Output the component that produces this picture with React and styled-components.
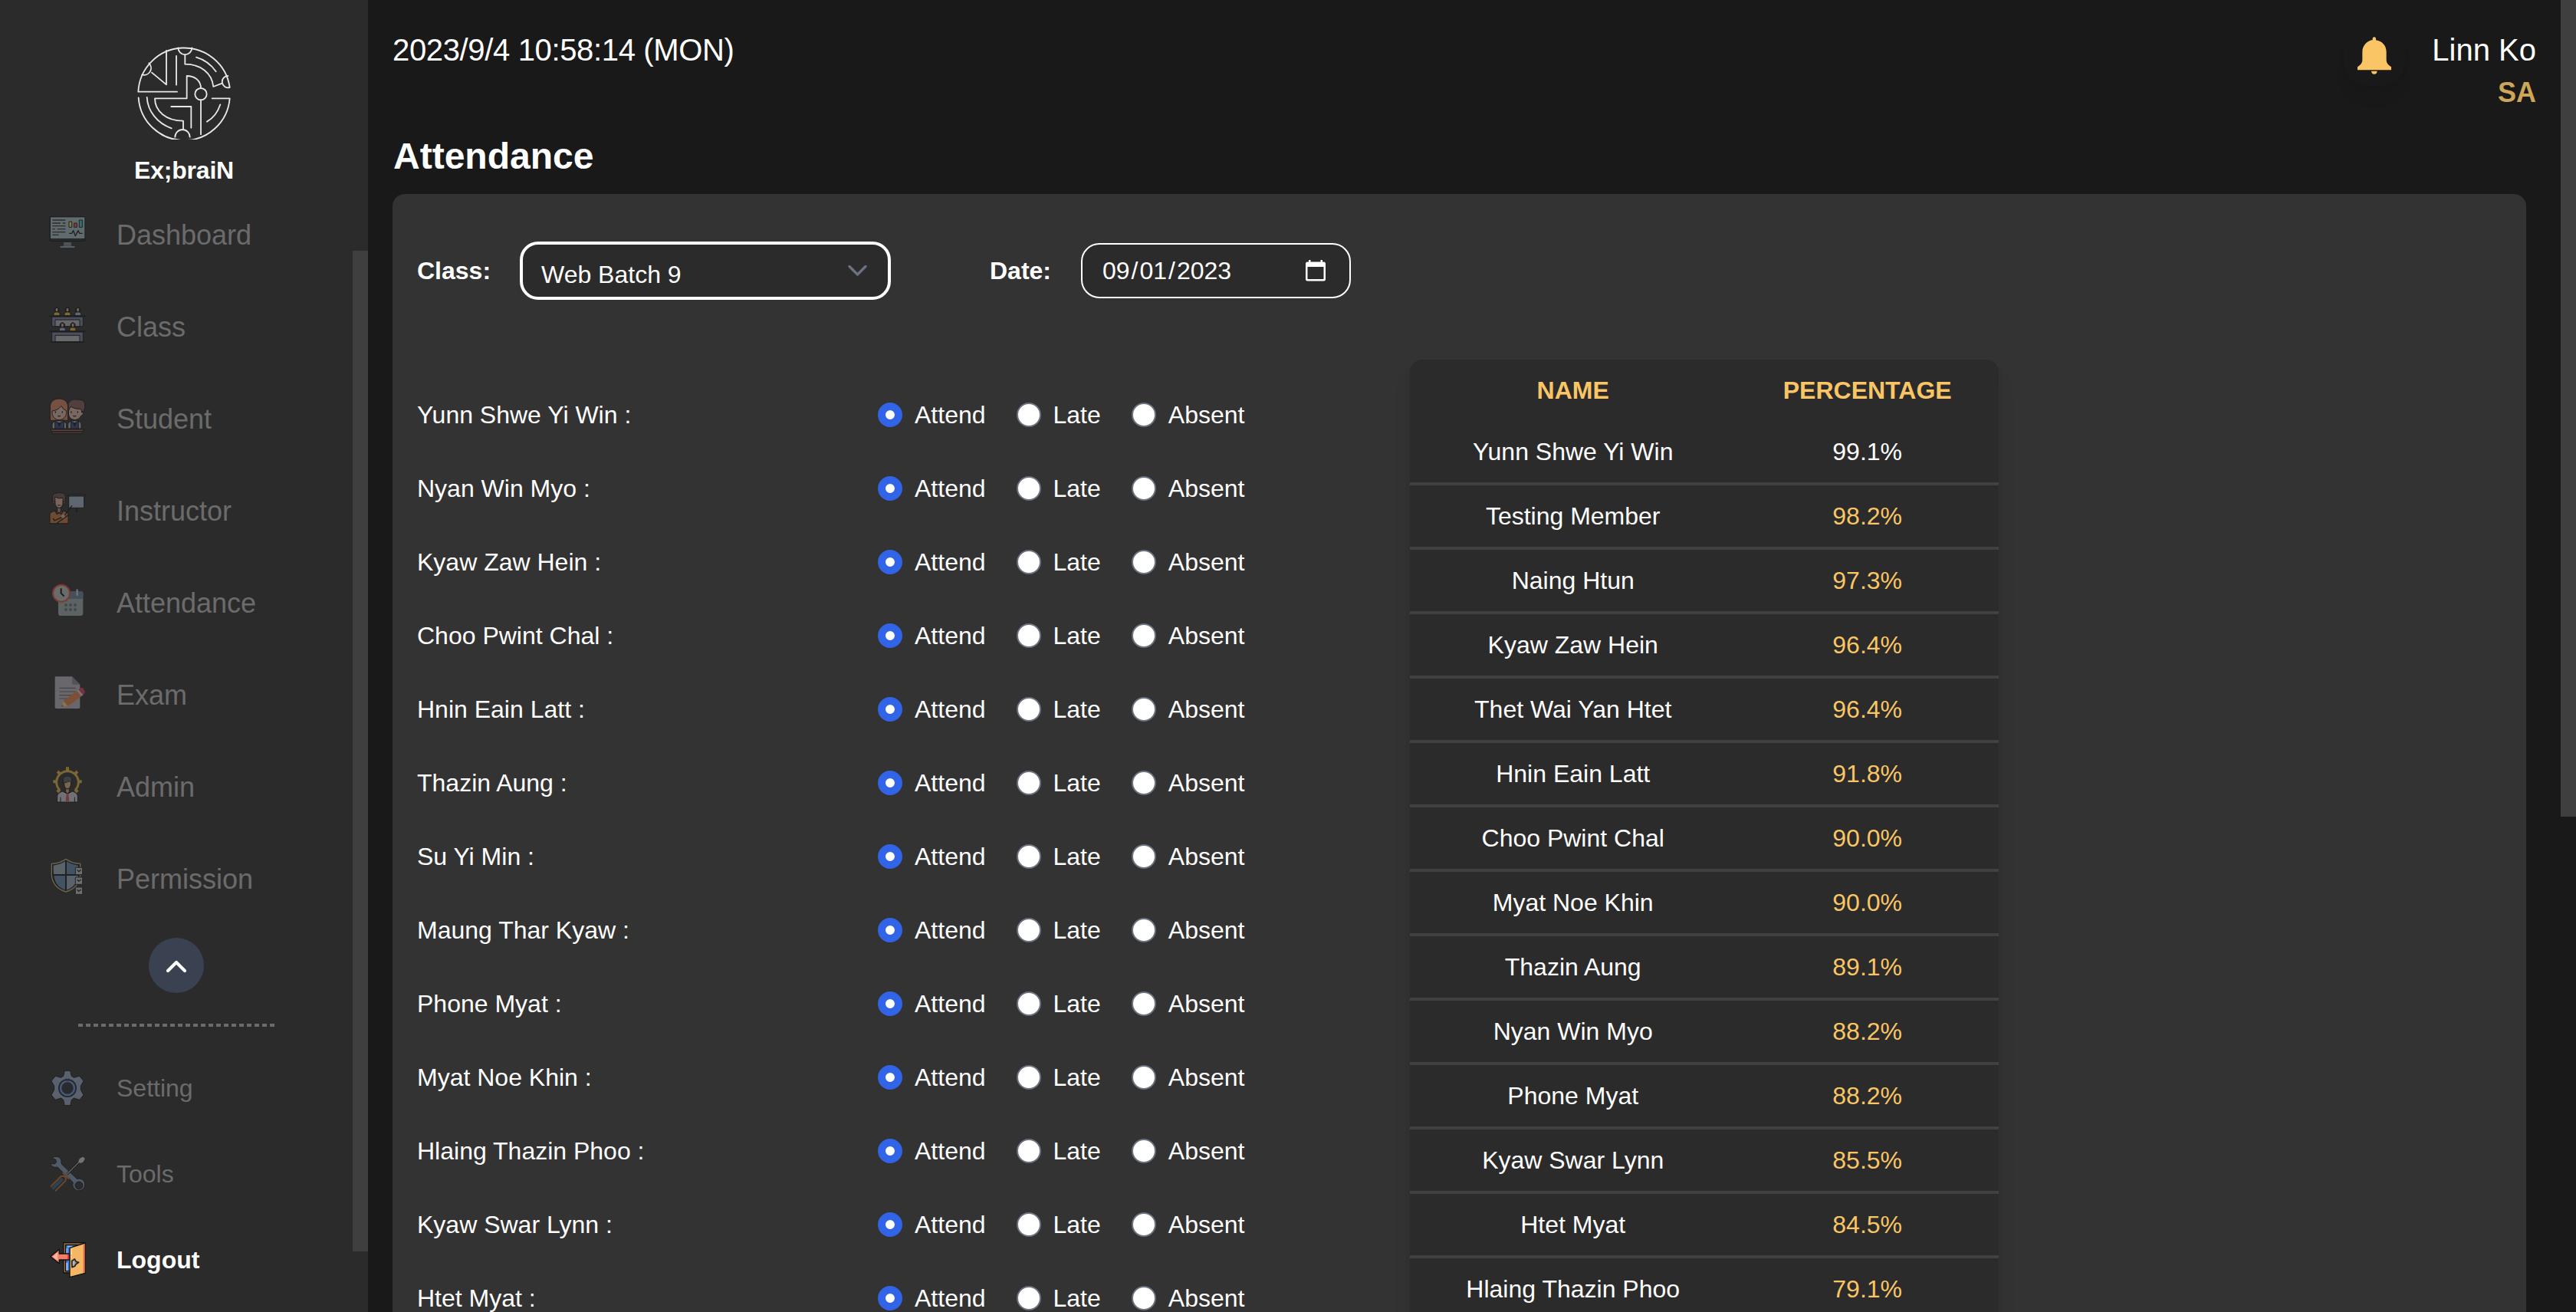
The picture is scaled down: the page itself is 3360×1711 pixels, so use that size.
import React from "react";
import styled, { createGlobalStyle } from "styled-components";

const GlobalStyle = createGlobalStyle`
  * { box-sizing: border-box; }
  body {
    margin: 0;
    background: #191919;
    color: #fff;
    font-family: "Liberation Sans", Arial, sans-serif;
    font-size: 32px;
    overflow: hidden;
  }
`;

const Page = styled.div`
  display: flex;
  width: 100%;
  height: 1711px;
  overflow: hidden;
`;

/* ---------- sidebar ---------- */

const Sidebar = styled.aside`
  display: flex;
  flex-direction: column;
  flex: none;
  width: 480px;
  background: #2b2b2b;
`;

const Brand = styled.div`
  display: flex;
  flex-direction: column;
  align-items: center;
  flex: none;
  height: 243px;
  padding-top: 60px;
  svg { display: block; }
`;

const BrandName = styled.div`
  margin-top: 20px;
  font-weight: 700;
  line-height: 40px;
  letter-spacing: -0.2px;
`;

const SideBody = styled.div`
  display: flex;
  flex: 1;
  min-height: 0;
`;

const SideContent = styled.div`
  display: flex;
  flex-direction: column;
  flex: 1;
`;

const Rail = styled.div`
  flex: none;
  width: 20px;
  padding-top: ${(p) => p.$offset}px;
`;

const Thumb = styled.div`
  height: ${(p) => p.$length}px;
  background: #3f3f3f;
`;

const NavItem = styled.a`
  display: flex;
  align-items: center;
  gap: 40px;
  flex: none;
  height: ${(p) => (p.$small ? 112 : 120)}px;
  padding-left: 64px;
  font-size: ${(p) => (p.$small ? 32 : 36)}px;
  font-weight: ${(p) => (p.$active ? 700 : 400)};
  color: ${(p) => (p.$active ? "#fff" : "#6b6b6b")};
  svg { display: block; flex: none; }
  span { padding-top: ${(p) => (p.$small ? 0 : 7)}px; }
`;

const Collapse = styled.button`
  display: flex;
  align-items: center;
  justify-content: center;
  align-self: center;
  flex: none;
  width: 72px;
  height: 72px;
  margin: 20px 0 40px;
  padding: 4px 0 0;
  border: 0;
  border-radius: 50%;
  background: #3a4150;
`;

const Divider = styled.div`
  align-self: center;
  flex: none;
  width: 256px;
  height: 4px;
  margin-bottom: 24px;
  background: repeating-linear-gradient(90deg, #6b6b6b 0 6px, transparent 6px 10px);
`;

/* ---------- main ---------- */

const Main = styled.main`
  display: flex;
  flex-direction: column;
  flex: 1;
  min-width: 0;
`;

const Header = styled.header`
  display: flex;
  justify-content: space-between;
  flex: none;
  height: 172px;
  padding: 35px 32px 0;
`;

const Clock = styled.div`
  font-size: 40px;
  line-height: 60px;
  letter-spacing: -0.35px;
`;

const Account = styled.div`
  display: flex;
`;

const BellButton = styled.button`
  display: flex;
  align-items: center;
  justify-content: center;
  width: 80px;
  height: 80px;
  margin: -3px 35px 0 0;
  padding: 0;
  border: 0;
  border-radius: 32px;
  background: transparent;
  box-shadow: 0 20px 24px -8px rgba(0, 0, 0, 0.06), 0 6px 10px -4px rgba(0, 0, 0, 0.06);
`;

const User = styled.div`
  padding-top: 2px;
  text-align: right;
  font-size: 40px;
  line-height: 56px;
`;

const Role = styled.div`
  font-size: 36px;
  font-weight: 700;
  color: #cfa557;
`;

const Title = styled.h1`
  flex: none;
  margin: 0 0 17px 33px;
  font-size: 48px;
  font-weight: 700;
  line-height: 64px;
`;

const Panel = styled.section`
  flex: 1;
  min-height: 0;
  margin: 0 45px 0 32px;
  padding: 62px 32px 0;
  border-radius: 16px 16px 0 0;
  background: #333;
  overflow: hidden;
`;

const Filters = styled.div`
  display: flex;
  align-items: center;
  height: 76px;
`;

const Label = styled.label`
  font-weight: 700;
  width: ${(p) => p.$width}px;
  margin-left: ${(p) => p.$gap || 0}px;
`;

const Select = styled.div`
  display: flex;
  align-items: center;
  justify-content: space-between;
  width: 484px;
  height: 76px;
  padding: 10px 27px 0 24px;
  border: 4px solid #fff;
  border-radius: 24px;
  background: #2b2b2b;
  svg { display: block; margin-top: -11px; }
`;

const DateField = styled.div`
  display: flex;
  align-items: center;
  width: 352px;
  height: 72px;
  padding: 0 28px 0 24px;
  border: 2px solid #fff;
  border-radius: 24px;
  background: #2b2b2b;
  svg { display: block; margin-left: auto; }
`;

const DatePart = styled.span`
  padding: 0 2px;
`;

const Body = styled.div`
  display: flex;
  align-items: flex-start;
  margin-top: 78px;
`;

const Roster = styled.div`
  flex: none;
  width: 1295px;
  padding-top: 24px;
`;

const RosterRow = styled.div`
  display: flex;
  align-items: center;
  height: 96px;
`;

const RosterName = styled.div`
  width: 601px;
`;

const Option = styled.label`
  display: flex;
  align-items: center;
  gap: 16px;
  margin-right: 40px;
`;

const Radio = styled.input`
  appearance: none;
  width: 32px;
  height: 32px;
  margin: 0;
  border: 2px solid #6b7280;
  border-radius: 50%;
  background: #fff;
  &:checked {
    border: 10px solid #3164e6;
  }
`;

const Table = styled.div`
  width: 768px;
  border-radius: 16px;
  background: #2b2b2b;
  box-shadow: 0 20px 30px -6px rgba(0, 0, 0, 0.1), 0 8px 12px -4px rgba(0, 0, 0, 0.1);
`;

const TableRow = styled.div`
  display: grid;
  grid-template-columns: 425.4px 342.6px;
  align-items: center;
  height: 84px;
  border-bottom: 4px solid #414141;
  text-align: center;
`;

const TableHead = styled(TableRow)`
  height: 80px;
  border-bottom: 0;
  font-weight: 700;
  color: #f9c565;
`;

const Percent = styled.div`
  color: ${(p) => (p.$top ? "#fff" : "#f9c565")};
`;

/* ---------- drawings ---------- */

const Logo = () => (
  <svg width="122" height="122" viewBox="117 90 366 366" fill="none" stroke="#e6e8e8" strokeWidth="5.5" strokeLinecap="round" strokeLinejoin="round">
    <path d="M273 269H121A180 180 0 0 1 479 252A23 23 0 1 1 472 207" />
    <path d="M449 236L415 249C409 196 366 161 304 161V124" />
    <path d="M277 97A27 27 0 0 0 331 97" />
    <path d="M348 134Q396 148 425 190" />
    <path d="M163 157A27 27 0 0 1 136 202M174 194L231 241V108M270 129V242" />
    <path d="M410 295H479A179 179 0 0 1 122 292" />
    <path d="M366 255C366 228 345 207 311 207V295H186C186 345 230 383 297 383V417" />
    <path d="M265 446A29 29 0 0 1 323 446M366 301V436" />
    <circle cx="366" cy="278" r="23" />
    <path d="M250 327H328V410M442 319Q427 365 390 386M155 291C158 345 195 392 251 412" />
  </svg>
);

const Icon = ({ y, children }) => (
  <svg width="48" height="48" viewBox={`72 ${y} 144 144`} fill="none" strokeLinejoin="round">
    {children}
  </svg>
);

const DashboardIcon = () => (
  <Icon y={57}>
    <rect x="74" y="67" width="140" height="98" rx="4" fill="#1c1e1f" />
    <rect x="78" y="70" width="133" height="83" fill="#616a6c" />
    <path d="M78 155H211V161H78Z" fill="#2a2d2e" />
    <path d="M130 168H158L160 182H128Z" fill="#4c5558" />
    <path d="M116 186H172" stroke="#566064" strokeWidth="6" />
    <path d="M85 81H136M85 93H117M125 93H136M85 104H136M85 116H96M104 116H136M85 128H136M85 139H110" stroke="#2a2e2f" strokeWidth="4" />
    <g stroke="#222" strokeWidth="3">
      <rect x="150" y="87" width="11" height="22" fill="#8a7840" />
      <rect x="170" y="93" width="11" height="16" fill="#87413f" />
      <rect x="190" y="81" width="12" height="28" fill="#2f7276" />
    </g>
    <path d="M150 133H161L167 122L175 143L186 122L191 133H203" stroke="#222" strokeWidth="4" />
  </Icon>
);

const Bust = ({ x, y, fill }) => (
  <g stroke="#1f1f20" strokeWidth="3">
    <path d={`M${x - 12} ${y + 34}V${y + 26}Q${x - 12} ${y + 19} ${x} ${y + 19}T${x + 12} ${y + 26}V${y + 34}Z`} fill={fill} />
    <path d={`M${x - 9} ${y + 19}V${y + 7}Q${x} ${y - 5} ${x + 9} ${y + 7}V${y + 19}Z`} fill="#272626" />
    <ellipse cx={x} cy={y + 11} rx="6" ry="8" fill="#766763" />
  </g>
);

const ClassIcon = () => (
  <Icon y={417}>
    <Bust x={102} y={421} fill="#7d682e" />
    <Bust x={144} y={421} fill="#7d682e" />
    <Bust x={185} y={421} fill="#5c6675" />
    <path d="M83 459H205V497H83Z" fill="#4b4f5d" stroke="#1f1f20" strokeWidth="3" />
    <path d="M96 471H192V497H96Z" fill="#656668" stroke="#1f1f20" strokeWidth="3" />
    <path d="M73 457H215M73 516H215" stroke="#1f1f20" strokeWidth="5" />
    <Bust x={124} y={481} fill="#5c6675" />
    <Bust x={165} y={481} fill="#7d682e" />
    <path d="M83 519H205V557H83Z" fill="#4b4f5d" stroke="#1f1f20" strokeWidth="3" />
    <path d="M96 532H192V557H96Z" fill="#68696a" stroke="#1f1f20" strokeWidth="3" />
    <path d="M78 558H210" stroke="#1f1f20" strokeWidth="4" />
  </Icon>
);

const StudentIcon = () => (
  <Icon y={777}>
    <g stroke="#211f1f" strokeWidth="3">
      <path d="M84 897V880Q86 866 112 866T140 880V897Z" fill="#656468" />
      <path d="M146 897V880Q148 866 172 866T198 880V897Z" fill="#656468" />
      <path d="M95 897V868L112 876L130 868V897ZM157 897V868L172 876L187 868V897Z" fill="#30344f" />
      <path d="M76 862V812C76 791 91 780 111 780S146 791 146 812V862Q142 868 132 864L90 865Q80 868 76 862Z" fill="#765040" />
      <path d="M84 828Q107 825 120 808Q126 822 140 827C142 850 127 863 111 863S82 848 84 828Z" fill="#7a6761" />
      <path d="M147 800Q155 779 181 783Q211 782 212 802V812Q212 825 205 830L147 828Z" fill="#513f3d" />
      <path d="M148 828Q153 811 158 812Q178 822 196 820Q200 826 200 834Q209 832 204 842L198 846Q190 862 172 863Q150 860 148 840Z" fill="#7a6761" />
      <path d="M80 900H206V908H80Z" fill="#5b4140" />
      <path d="M84 909H202V917H84Z" fill="#4c393a" />
    </g>
    <path d="M97 829V836M124 829V836M159 829V836M184 829V836M106 846Q111 851 117 846M166 846Q172 851 178 846" stroke="#282424" strokeWidth="4" />
    <path d="M104 874L112 890L120 874ZM165 874L172 890L179 874Z" fill="#1f1f24" />
  </Icon>
);

const InstructorIcon = () => (
  <Icon y={57}>
    <g stroke="#1f1e1e" strokeWidth="3">
      <path d="M146 74H215V80H146Z" fill="#32393f" />
      <path d="M149 81H209V127H149Z" fill="#5e6670" />
      <path d="M75 188V152Q77 142 97 139L111 146L125 139Q146 142 147 153V188Z" fill="#6e4a31" />
      <path d="M104 126H118V142L111 147L104 142Z" fill="#65534b" />
      <path d="M85 103V86Q86 70 100 70Q111 64 124 69Q136 71 136 86V103Z" fill="#483a38" />
      <path d="M95 84Q109 93 126 88V112Q124 126 111 128Q98 126 96 112Z" fill="#7a655c" />
      <path d="M86 100Q91 99 95 110Q86 112 86 100ZM136 100Q131 99 127 110Q136 112 136 100Z" fill="#7a655c" />
    </g>
    <path d="M103 115H119Q111 124 103 115Z" fill="#3a302e" />
    <path d="M162 118L130 160M88 168L93 177L122 164M147 155L103 187M179 129V141" stroke="#1d1c1c" strokeWidth="4" />
    <circle cx="127" cy="160" r="7" fill="#7a655c" />
    <path d="M173 136H186L179 146Z" fill="#1f2021" />
    <path d="M95 139L103 151L111 146L120 151L127 139" stroke="#22262b" strokeWidth="5" />
  </Icon>
);

const AttendanceIcon = () => (
  <Icon y={417}>
    <rect x="108" y="453" width="97" height="96" rx="10" fill="#5d6364" />
    <path d="M108 483V463Q108 453 118 453H195Q205 453 205 463V483Z" fill="#455058" />
    <path d="M182 448V468" stroke="#6e7374" strokeWidth="7" strokeLinecap="round" />
    <g fill="#414b4c">
      {[138, 156, 174].map((x) =>
        [507, 525].map((y) => <rect key={`${x}-${y}`} x={x - 6} y={y - 6} width="12" height="12" rx="5" />)
      )}
    </g>
    <circle cx="120" cy="461" r="33" fill="#6a6c6c" stroke="#7d3b34" strokeWidth="6" />
    <path d="M119 442V461L131 473" stroke="#1c1c1c" strokeWidth="6" />
  </Icon>
);

const ExamIcon = () => (
  <Icon y={777}>
    <path d="M95 791Q95 787 99 787H162L193 818V907Q193 912 188 912H100Q95 912 95 907Z" fill="#69676b" />
    <path d="M162 787L193 818H167Q162 818 162 812Z" fill="#555159" />
    <path d="M112 832H176M112 846H176M112 860H165M112 873H145" stroke="#454347" strokeWidth="3.5" />
    <path d="M121 905L128 881L182 842L200 863L145 903Z" fill="#7c5036" />
    <path d="M121 905L128 881L145 903Z" fill="#877253" />
    <path d="M121 905L123 897L129 903Z" fill="#444" />
    <path d="M181 842L189 836L207 857L198 864Z" fill="#777379" />
    <path d="M187 838L194 832Q200 828 206 834L211 842Q215 849 209 855L205 859Z" fill="#76323f" />
  </Icon>
);

const AdminIcon = () => (
  <Icon y={57}>
    <g stroke="#7b6635" strokeWidth="12">
      <path d="M144 61V78M88 118H103M185 118H200M105 78L115 88M183 78L173 88M104 158L114 149M184 158L174 149" />
      <path d="M114 151A43 43 0 1 1 174 151" strokeWidth="9" />
    </g>
    <g stroke="#202021" strokeWidth="3">
      <path d="M104 198V174Q106 161 125 156L144 166L163 156Q182 161 184 174V198Z" fill="#707176" />
      <path d="M137 143H151V158L144 166L137 158Z" fill="#6d604e" />
      <path d="M127 124V108Q129 96 144 96T161 108V124Z" fill="#3d4045" />
      <path d="M131 122Q145 121 152 115Q154 121 158 123Q157 145 144 146T131 122Z" fill="#77674f" />
      <path d="M117 198V179M172 198V179" />
    </g>
    <path d="M140 165H148L151 198H137Z" fill="#743b3a" />
  </Icon>
);

const PermissionIcon = () => (
  <Icon y={417}>
    <path d="M138 421Q164 439 194 439V484Q190 532 138 549Q86 532 82 484V439Q112 439 138 421Z" fill="#1e2225" stroke="#6e654b" strokeWidth="4" />
    <path d="M135 430V480H90Q88 463 89 446Q115 443 135 430Z" fill="#596369" />
    <path d="M141 430V480H186V446Q161 443 141 430Z" fill="#435363" />
    <path d="M135 486V542Q95 527 91 486Z" fill="#435363" />
    <path d="M141 486V542Q181 527 186 486Z" fill="#596369" />
    {[468, 506, 545].map((y) => (
      <g key={y}>
        <rect x="175" y={y - 14} width="28" height="28" rx="2" fill="#6b6d6e" stroke="#232425" strokeWidth="3" />
        <path d={`M182 ${y - 5}L188 ${y + 2}L197 ${y - 5}`} stroke="#242526" strokeWidth="4" />
      </g>
    ))}
  </Icon>
);

const SettingIcon = () => (
  <Icon y={255}>
    <path
      d="M133 259H155L160 280L169 286L191 280L207 299L196 319V334L207 354L191 373L169 366L160 373L155 395H133L128 373L119 366L97 373L81 354L92 334V319L81 299L97 280L119 286L128 280Z"
      fill="#5a616d" stroke="#1d1f22" strokeWidth="3"
    />
    <circle cx="144" cy="327" r="36" fill="#22262c" />
    <circle cx="144" cy="327" r="27" fill="#292b2d" stroke="#465877" strokeWidth="8" />
    <path d="M144 289V302M139 289V300M149 289V300" stroke="#292e36" strokeWidth="2" />
  </Icon>
);

const ToolsIcon = () => (
  <Icon y={591}>
    <path d="M95 595Q115 593 120 611V623L181 682A24 24 0 1 1 166 696L105 636Q84 641 77 622L94 624L101 616L97 606L83 602Z" fill="#505a66" stroke="#1e2021" strokeWidth="3" />
    <circle cx="189" cy="708" r="15" fill="#2b2b2b" stroke="#1e2021" strokeWidth="3" />
    <path d="M142 664L189 617" stroke="#1e2021" strokeWidth="9" />
    <path d="M142 664L190 616" stroke="#5e666e" strokeWidth="4" />
    <path d="M187 617Q187 600 205 596L212 602Q208 620 193 620Z" fill="#737476" />
    <path d="M127 660L149 682L140 691L98 731L76 711L117 671Z" fill="#2a2625" />
    <path d="M78 713L119 672Q134 668 138 682L136 690L96 730M125 658L150 683" stroke="#6b4931" strokeWidth="6" />
    <path d="M85 721L125 682" stroke="#2c4250" strokeWidth="13" />
  </Icon>
);

const LogoutIcon = () => (
  <Icon y={924}>
    <g stroke="#111" strokeWidth="4">
      <path d="M128 929H212V1047H128Z" fill="#8b622c" />
      <path d="M137 938H204V1040H137Z" fill="#397be0" />
    </g>
    <path d="M143 944H163M142 950V975" stroke="#8bb9ff" strokeWidth="5" />
    <path d="M142 1007V1038" stroke="#b3d2ff" strokeWidth="5" />
    <path d="M153 949L213 930V1048L153 1064Z" fill="#f5b764" stroke="#111" strokeWidth="4" />
    <path d="M209 933V1046" stroke="#e8684e" strokeWidth="6" />
    <path d="M160 954V990" stroke="#ffe0ae" strokeWidth="4" strokeDasharray="22 5 9 4" />
    <path d="M78 983L112 955V972H150V996H112V1010Z" fill="#f07e64" stroke="#111" strokeWidth="4" />
    <path d="M86 983L106 966V999Z" fill="#f9b3a2" />
    <path d="M147 974V994" stroke="#d92f56" strokeWidth="5" />
    <path d="M161 1000L172 993L178 1003L188 1006L176 1014L173 1021L162 1025Z" fill="#9a9a96" stroke="#222" strokeWidth="5" />
    <path d="M168 1002V1016" stroke="#ddd" strokeWidth="3" />
  </Icon>
);

const Bell = () => (
  <svg width="44" height="49" viewBox="225 143 132 147">
    <path
      d="M284 155V150Q284 144 290.500 144T297 150V156C322 160 338 178 338 202V232C338 246 345 252 357 261V273H225V261C237 252 244 246 244 232V202C244 178 260 160 284 155Z"
      fill="#f9c565"
    />
    <path d="M279 277H302Q301 289 290.500 289T279 277Z" fill="#f9c565" />
  </svg>
);

const Chevron = ({ up }) =>
  up ? (
    <svg width="28" height="20" viewBox="0 0 28 20" fill="none" stroke="#fff" strokeWidth="4.200" strokeLinecap="round" strokeLinejoin="round">
      <path d="M3 15L14 4L25 15" />
    </svg>
  ) : (
    <svg width="26" height="16" viewBox="0 0 26 16" fill="none" stroke="#6b7280" strokeWidth="3.300" strokeLinecap="round" strokeLinejoin="round">
      <path d="M3 2.500L13.500 13L24 2.500" />
    </svg>
  );

const Calendar = () => (
  <svg width="32" height="32" viewBox="0 0 32 32">
    <path fillRule="evenodd" fill="#fff" d="M7 2H9.500V4.500H22.500V2H25V4.500H26.500Q29 4.500 29 7V27Q29 29.500 26.500 29.500H5.500Q3 29.500 3 27V7Q3 4.500 5.500 4.500H7ZM5.500 11V27H26.500V11Z" />
  </svg>
);

/* ---------- data ---------- */

const navItems = [
  ["Dashboard", DashboardIcon],
  ["Class", ClassIcon],
  ["Student", StudentIcon],
  ["Instructor", InstructorIcon],
  ["Attendance", AttendanceIcon],
  ["Exam", ExamIcon],
  ["Admin", AdminIcon],
  ["Permission", PermissionIcon],
];

const footItems = [
  ["Setting", SettingIcon],
  ["Tools", ToolsIcon],
  ["Logout", LogoutIcon],
];

const roster = [
  "Yunn Shwe Yi Win", "Nyan Win Myo", "Kyaw Zaw Hein", "Choo Pwint Chal", "Hnin Eain Latt",
  "Thazin Aung", "Su Yi Min", "Maung Thar Kyaw", "Phone Myat", "Myat Noe Khin",
  "Hlaing Thazin Phoo", "Kyaw Swar Lynn", "Htet Myat",
];

const ranking = [
  ["Yunn Shwe Yi Win", "99.1%"],
  ["Testing Member", "98.2%"],
  ["Naing Htun", "97.3%"],
  ["Kyaw Zaw Hein", "96.4%"],
  ["Thet Wai Yan Htet", "96.4%"],
  ["Hnin Eain Latt", "91.8%"],
  ["Choo Pwint Chal", "90.0%"],
  ["Myat Noe Khin", "90.0%"],
  ["Thazin Aung", "89.1%"],
  ["Nyan Win Myo", "88.2%"],
  ["Phone Myat", "88.2%"],
  ["Kyaw Swar Lynn", "85.5%"],
  ["Htet Myat", "84.5%"],
  ["Hlaing Thazin Phoo", "79.1%"],
];

const statuses = ["Attend", "Late", "Absent"];

export default function App() {
  return (
    <>
      <GlobalStyle />
      <Page>
        <Sidebar>
          <Brand>
            <Logo />
            <BrandName>Ex;braiN</BrandName>
          </Brand>
          <SideBody>
            <SideContent>
              {navItems.map(([label, Glyph]) => (
                <NavItem key={label}>
                  <Glyph />
                  <span>{label}</span>
                </NavItem>
              ))}
              <Collapse aria-label="Collapse">
                <Chevron up />
              </Collapse>
              <Divider />
              {footItems.map(([label, Glyph]) => (
                <NavItem key={label} $small $active={label === "Logout"}>
                  <Glyph />
                  <span>{label}</span>
                </NavItem>
              ))}
            </SideContent>
            <Rail $offset={84}>
              <Thumb $length={1305} />
            </Rail>
          </SideBody>
        </Sidebar>

        <Main>
          <Header>
            <Clock>2023/9/4 10:58:14 (MON)</Clock>
            <Account>
              <BellButton aria-label="Notifications">
                <Bell />
              </BellButton>
              <User>
                Linn Ko
                <Role>SA</Role>
              </User>
            </Account>
          </Header>
          <Title>Attendance</Title>
          <Panel>
            <Filters>
              <Label $width={134}>Class:</Label>
              <Select>
                Web Batch 9
                <Chevron />
              </Select>
              <Label $width={119} $gap={129}>Date:</Label>
              <DateField>
                <DatePart>09</DatePart>/<DatePart>01</DatePart>/<DatePart>2023</DatePart>
                <Calendar />
              </DateField>
            </Filters>
            <Body>
              <Roster>
                {roster.map((name) => (
                  <RosterRow key={name}>
                    <RosterName>{name} :</RosterName>
                    {statuses.map((status) => (
                      <Option key={status}>
                        <Radio type="radio" name={name} defaultChecked={status === "Attend"} />
                        {status}
                      </Option>
                    ))}
                  </RosterRow>
                ))}
              </Roster>
              <Table>
                <TableHead>
                  <div>NAME</div>
                  <div>PERCENTAGE</div>
                </TableHead>
                {ranking.map(([name, percent], i) => (
                  <TableRow key={name}>
                    <div>{name}</div>
                    <Percent $top={i === 0}>{percent}</Percent>
                  </TableRow>
                ))}
              </Table>
            </Body>
          </Panel>
        </Main>
        <Rail $offset={0}>
          <Thumb $length={1065} />
        </Rail>
      </Page>
    </>
  );
}
